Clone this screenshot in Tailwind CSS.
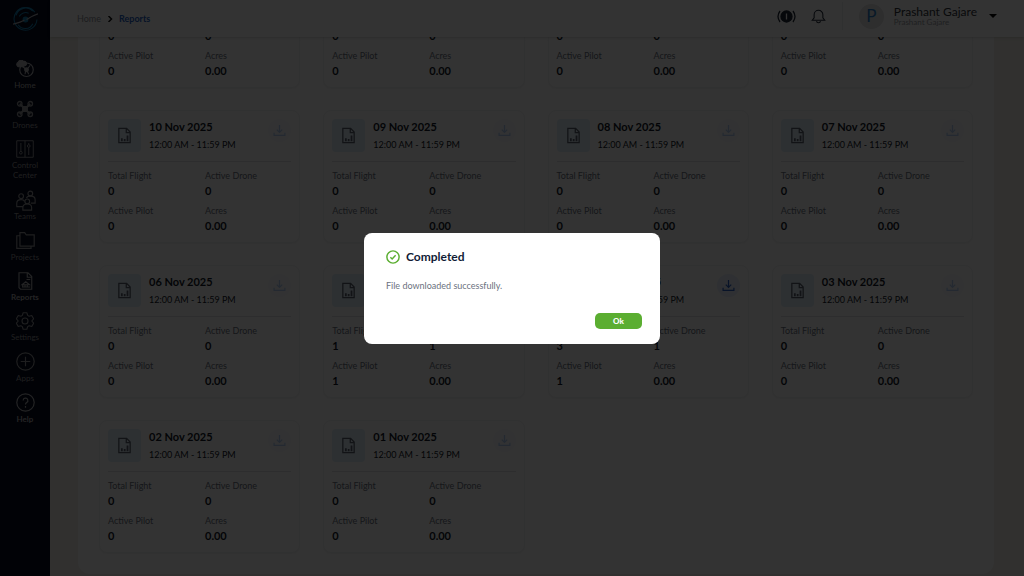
<!DOCTYPE html>
<html lang="en">
<head>
<meta charset="utf-8">
<meta name="viewport" content="width=device-width, initial-scale=1">
<title>Reports</title>
<script src="https://cdn.jsdelivr.net/npm/@tailwindcss/browser@4"></script>
</head>
<body class="h-screen overflow-hidden bg-[#f2f0e8] font-['Lato',sans-serif] text-[#111827]">
<svg class="hidden" fill="none" stroke="currentColor">
  <symbol id="file" viewBox="0 0 24 24"><path d="M4 2h11l5 5v15H4z M14.500 2v6H20" fill="none" stroke="currentColor" stroke-width="1.800"/><path d="M7 20v-4h2.500v4z M11 20v-3h2.500v3z M15 20v-8h2.500v8z" fill="currentColor"/></symbol>
  <symbol id="download" viewBox="0 0 24 24"><path d="M12 2v13M7 10.500l5 5 5-5M2 16v5h20v-5" fill="none" stroke="currentColor" stroke-width="2.200"/></symbol>
</svg>
<div class="flex h-full">
  <nav class="flex w-[50px] shrink-0 flex-col items-center bg-[#050a1e] pt-[7px] text-[8px] leading-[10px] text-[#97989b]">
    <a href="#" aria-label="Dashboard" class="mb-[28px] text-[#1480b4]">
      <svg class="size-[25px]" viewBox="0 0 24 24" fill="none" stroke="currentColor"><path d="M21 5A11 11 0 1 0 23 12M3 8a9.500 9.500 0 0 1 16-4M5 17a8 8 0 0 0 14-1M6 9a7 7 0 0 1 9-3" stroke-width="1"/><circle cx="12" cy="12" r="2.300" fill="currentColor"/><path d="M0 16.500c4-1 8-2 11-4M13 12c3-2 6-4 11-5.500" stroke="#b0b2b8" stroke-width="1.200"/></svg>
    </a>
    <div class="flex flex-col items-center gap-[10px] text-center">
      <a href="#" class="flex flex-col items-center gap-[2px] text-[#b5b6b9]"><svg class="size-[18px]" viewBox="0 0 24 24" fill="none" stroke="currentColor" stroke-width="1.500"><circle cx="14" cy="13" r="9"/><circle cx="14" cy="13" r="2.500" fill="currentColor"/><path d="M9 9l4 3M19 7l-4 5M12 19l1-5M15 15l2 4"/><path d="M2 8a3 3 0 0 1 1-5 4 4 0 0 1 7-1 3 3 0 0 1 3 5l-4 2H3z" fill="currentColor"/></svg>Home</a>
      <a href="#" class="flex flex-col items-center gap-[2px]"><svg class="size-[18px]" viewBox="0 0 24 24" fill="none" stroke="currentColor" stroke-width="1.800"><circle cx="5" cy="5" r="3"/><circle cx="19" cy="5" r="3"/><circle cx="5" cy="19" r="3"/><circle cx="19" cy="19" r="3"/><path d="M5 5l14 14M19 5L5 19" stroke-width="2.500"/><path d="M9 9h6v6H9z" fill="currentColor"/></svg>Drones</a>
      <a href="#" class="flex flex-col items-center gap-[2px]"><svg class="size-[18px]" viewBox="0 0 24 24" fill="none" stroke="currentColor" stroke-width="1.300"><path d="M1 1h22v22H1zM6.500 4v11M17 10v10M12 1v22M17 4v2"/><circle cx="6.500" cy="17" r="1.800"/><circle cx="17" cy="8" r="1.800"/></svg><span>Control<br>Center</span></a>
      <a href="#" class="flex flex-col items-center"><svg class="size-[21px]" viewBox="0 0 24 24" fill="none" stroke="currentColor" stroke-width="1.300"><circle cx="7" cy="7" r="2.700"/><circle cx="17.500" cy="4" r="2.700"/><circle cx="14" cy="13" r="2.700"/><path d="M9 19H2v-4q0-4 5-4 3 0 4 2M13 9q1-2 5-2 5 0 5 4v4h-5M9 23v-3q0-4 5-4t5 4v3z"/></svg>Teams</a>
      <a href="#" class="flex flex-col items-center gap-[2px]"><svg class="size-[19px]" viewBox="0 0 24 24" fill="none" stroke="currentColor" stroke-width="1.500"><path d="M5 2h6l2 3h10v14H5zM5 6H1v16h18v-3"/></svg>Projects</a>
      <a href="#" aria-current="page" class="flex flex-col items-center gap-[2px] font-bold text-[#b0b1b4]"><svg class="size-[18px]" viewBox="0 0 24 24" fill="none" stroke="currentColor" stroke-width="1.500"><path d="M4 1h12l5 5v17H6l-2-2zM15 1v6h6M14 10h5M8 20h11M8 17l5-4 5 4zM9 17v3M12 17v3M15 17v3"/></svg>Reports</a>
      <a href="#" class="flex flex-col items-center gap-[2px]"><svg class="size-[18px]" viewBox="0 0 24 24" fill="none" stroke="currentColor" stroke-width="1.500" stroke-linejoin="round"><circle cx="12" cy="12" r="4"/><path d="M9.500 1h5l1 3.500 2 1.200 3.500-1 2.500 4.300-2.500 3 2.500 3-2.500 4.300-3.500-1-2 1.200-1 3.500h-5l-1-3.500-2-1.200-3.500 1L.500 15 3 12 .500 9 3 4.700l3.500 1 2-1.200z"/></svg>Settings</a>
      <a href="#" class="flex flex-col items-center gap-[2px]"><svg class="size-[19px]" viewBox="0 0 24 24" fill="none" stroke="currentColor" stroke-width="1.500"><circle cx="12" cy="12" r="11"/><path d="M12 6v12M6 12h12"/></svg>Apps</a>
      <a href="#" class="flex flex-col items-center gap-[2px] font-bold text-[#b0b1b4]"><svg class="size-[19px]" viewBox="0 0 24 24" fill="none" stroke="currentColor" stroke-width="1.500"><circle cx="12" cy="12" r="11"/><path d="M9 9.500a3 3 0 1 1 4.500 2.500q-1.500 1-1.500 2.500M12 16.500v2"/></svg>Help</a>
    </div>
  </nav>
  <div class="flex min-w-0 flex-1 flex-col">
    <header class="z-10 flex h-[37px] shrink-0 items-center bg-white px-[27px] shadow-sm">
      <div class="flex flex-1 items-center gap-[6px] pt-px text-[9px]">
        <a href="#" class="text-[#8f9299]">Home</a>
        <svg class="size-[6px]" viewBox="0 0 8 8" fill="none" stroke="#111" stroke-width="2"><path d="M2 0l4 4-4 4"/></svg>
        <a href="#" class="font-bold text-[#2663c4]">Reports</a>
      </div>
      <div class="flex items-center pb-[5px]">
        <button aria-label="Alerts"><svg class="h-[15px] w-[19px]" viewBox="0 0 19 15" fill="none" stroke="#1f2937" stroke-width="1.300"><circle cx="9.500" cy="7.500" r="5.500" fill="#1f2937"/><path d="M3 2q-4 5.500 0 11M16 2q4 5.500 0 11"/><path d="M9.500 4.500v6" stroke="#fff"/></svg></button>
        <button aria-label="Notifications" class="ml-[15px]"><svg class="size-[15px]" viewBox="0 0 24 24" fill="none" stroke="#1f2937" stroke-width="1.700"><path d="M12 2a7 7 0 0 0-7 7v5l-3 4h20l-3-4V9a7 7 0 0 0-7-7zM9 19a3 3 0 0 0 6 0"/></svg></button>
        <div class="ml-[16px] h-[28px] w-px bg-[#eceef1]"></div>
        <div class="ml-[16px] flex size-[25px] items-center justify-center rounded-full bg-[#e3e3e5] text-[17px] text-[#2a7fc9]">P</div>
        <div class="ml-[10px] flex flex-col">
          <span class="text-[12px] leading-[12px] text-[#30343b]">Prashant Gajare</span>
          <span class="text-[8px] leading-[9px] text-[#9a9da3]">Prashant Gajare</span>
        </div>
        <button aria-label="Account menu" class="ml-[12px]"><svg class="h-[4px] w-[8px]" viewBox="0 0 8 4"><path d="M0 0h8L4 4z"/></svg></button>
      </div>
    </header>
    <main class="flex min-h-0 flex-1 flex-col justify-end pr-[30px] pb-[2px] pl-[28px]">
      <section class="rounded-xl bg-white p-[21px]">
        <div id="cards" class="grid grid-cols-4 gap-x-[23px] gap-y-[22px]"></div>
      </section>
    </main>
  </div>
</div>
<template id="card">
  <article class="rounded-lg border border-[#f1f2f4] bg-white px-2 pt-[8px] pb-[9px] shadow-xs">
    <div class="flex border-b border-[#dfe1e5] pb-[8px]">
      <div class="flex size-[33px] items-center justify-center rounded bg-[#e0effa] text-[#59616e]"><svg class="size-[17px]"><use href="#file"/></svg></div>
      <div class="ml-2 flex-1">
        <h3 data-f="date" class="text-[11px] leading-[16px] font-bold"></h3>
        <p class="mt-[2px] text-[9px] leading-[16px]">12:00 AM - 11:59 PM</p>
      </div>
      <button aria-label="Download report" class="group flex size-[23px] items-center justify-center rounded-full bg-[#f7faff] text-[#b3cdf5] data-[on=true]:bg-[#e8f0fe] data-[on=true]:text-[#2b62c9]"><svg class="size-[13px]"><use href="#download"/></svg></button>
    </div>
    <dl class="mt-[6px] grid grid-cols-[97px_1fr] gap-y-[5px] text-[9px]">
      <div><dt class="leading-[15px] text-[#6b7280]">Total Flight</dt><dd data-f="flight" class="text-[11px] leading-[15px] font-bold"></dd></div>
      <div><dt class="leading-[15px] text-[#6b7280]">Active Drone</dt><dd data-f="drone" class="text-[11px] leading-[15px] font-bold"></dd></div>
      <div><dt class="leading-[15px] text-[#6b7280]">Active Pilot</dt><dd data-f="pilot" class="text-[11px] leading-[15px] font-bold"></dd></div>
      <div><dt class="leading-[15px] text-[#6b7280]">Acres</dt><dd class="text-[11px] leading-[15px] font-bold">0.00</dd></div>
    </dl>
  </article>
</template>
<div class="fixed inset-0 z-20 flex items-center justify-center bg-black/80">
  <div role="dialog" aria-modal="true" aria-labelledby="dialog-title" class="flex w-[296px] flex-col rounded-lg bg-white px-[22px] pt-4 pb-[15px]">
    <h2 id="dialog-title" class="flex items-center gap-[6px] text-[12px] leading-[16px] font-bold text-[#111c36]">
      <svg class="size-[14px]" viewBox="0 0 24 24" fill="none" stroke="#5bae31" stroke-width="2.500"><circle cx="12" cy="12" r="10.500"/><path d="M7.500 12.500l3 3 6-6.500"/></svg>Completed</h2>
    <p class="mt-[14px] text-[9px] leading-[14px] text-[#6b7280]">File downloaded successfully.</p>
    <button class="mt-[20px] mr-[-4px] h-[16px] w-[47px] self-end rounded-[5px] bg-[#5bae31] text-[8px] font-black text-white">Ok</button>
  </div>
</div>
<script>
const days = [14, 13, 12, 11, 10, 9, 8, 7, 6, 5, 4, 3, 2, 1];
const active = { 5: [1, 1, 1], 4: [3, 1, 1] };
const list = document.getElementById('cards');
const addCard = day => {
  const card = document.getElementById('card').content.cloneNode(true);
  const [flight, drone, pilot] = active[day] || [0, 0, 0];
  const values = { date: String(day).padStart(2, '0') + ' Nov 2025', flight, drone, pilot };
  card.querySelectorAll('[data-f]').forEach(el => { el.textContent = values[el.dataset.f]; });
  card.querySelector('button').dataset.on = String(day in active);
  list.append(card);
};
days.forEach(addCard);
</script>
</body>
</html>
